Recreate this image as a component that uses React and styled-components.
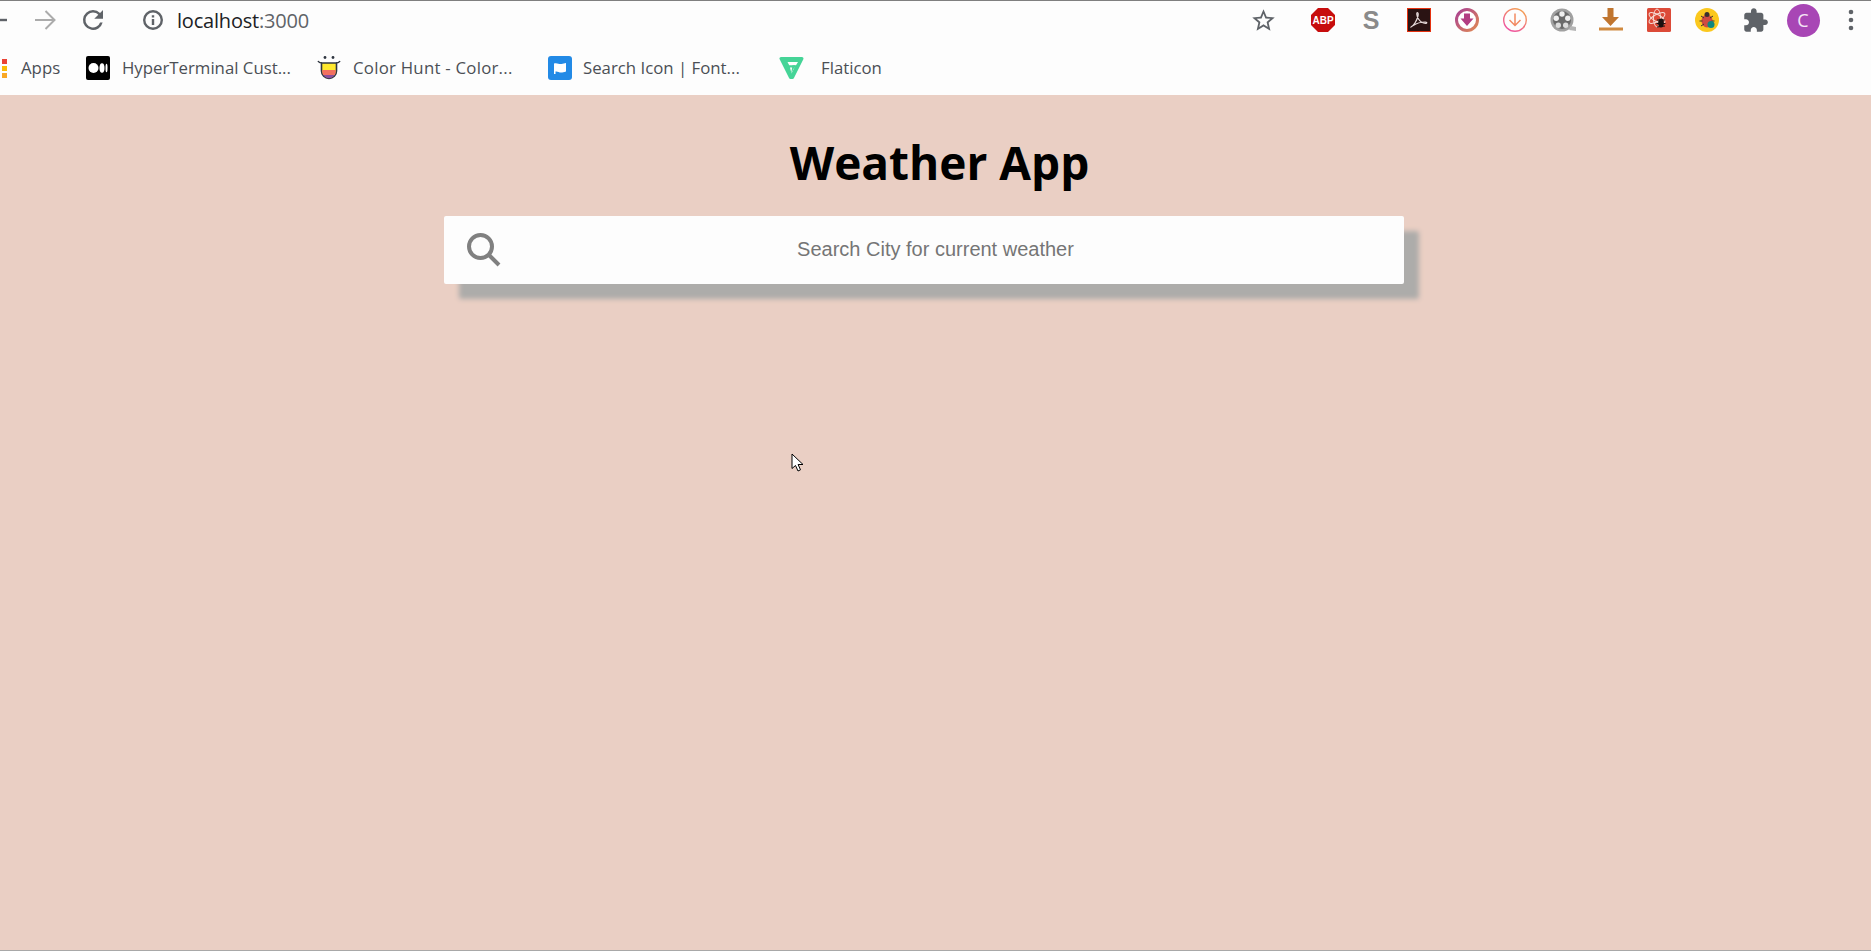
import React from "react";
import styled, { createGlobalStyle } from "styled-components";

const GlobalStyle = createGlobalStyle`
  html, body {
    margin: 0;
    padding: 0;
    height: 100%;
    overflow: hidden;
    background: #eacfc4;
  }
  #root {
    height: 100%;
  }
`;

const BackArrow = () => (
  <svg width="21" height="30" viewBox="0 0 21 30" fill="none" stroke="#5f6368" strokeWidth="2.4">
    <path d="M0 15h7" />
  </svg>
);

const ForwardArrow = () => (
  <svg width="24" height="24" viewBox="0 0 24 24" fill="none" stroke="#ababab" strokeWidth="2">
    <path d="M2 12h19M12.5 3l9 9-9 9" />
  </svg>
);

const ReloadIcon = () => (
  <svg width="30" height="30" viewBox="0 0 24 24" fill="#5f6368">
    <path d="M17.65 6.35A7.96 7.96 0 0 0 12 4a8 8 0 1 0 7.73 10h-2.08A6 6 0 1 1 12 6c1.66 0 3.14.69 4.22 1.78L13 11h7V4l-2.35 2.35z" />
  </svg>
);

const InfoIcon = () => (
  <svg width="24" height="24" viewBox="0 0 24 24" fill="#5f6368">
    <path d="M12 2a10 10 0 1 0 0 20 10 10 0 0 0 0-20zm0 17.6a7.6 7.6 0 1 1 0-15.2 7.6 7.6 0 0 1 0 15.2z" />
    <path d="M10.8 11h2.4v6h-2.4zM10.8 7.2h2.4v2.4h-2.4z" />
  </svg>
);

const StarIcon = () => (
  <svg width="27" height="27" viewBox="0 0 24 24" fill="#5f6368">
    <path d="M22 9.24l-7.19-.62L12 2 9.19 8.63 2 9.24l5.46 4.73L5.82 21 12 17.27 18.18 21l-1.63-7.03L22 9.24zM12 15.4l-3.76 2.27 1-4.28-3.32-2.88 4.38-.38L12 6.1l1.71 4.04 4.38.38-3.32 2.88 1 4.28L12 15.4z" />
  </svg>
);

const AbpIcon = () => (
  <svg width="26" height="26" viewBox="0 0 26 26">
    <path d="M8 1h10l7 7v10l-7 7H8l-7-7V8z" fill="#c70d0d" />
    <text x="13" y="17" textAnchor="middle" fontFamily="Liberation Sans" fontWeight="700" fontSize="10" fill="#fff">ABP</text>
  </svg>
);

const PdfIcon = () => (
  <svg width="24" height="24" viewBox="0 0 24 24">
    <rect x="0.5" y="0.5" width="23" height="23" fill="#2a1313" stroke="#e5310f" />
    <path d="M4 19c3-1.5 6-7 7-11 .4-2 .2-3.500-.6-3.500-1 0-.8 3.500 1.100 6.500 1.800 2.800 4.500 4.400 7.500 4.300 1.300-.1 1-1.300-.8-1.300-3.500 0-9 1.500-12 3.500-1.200.8-2.200 1.300-2.200 1.500z" fill="none" stroke="#e9dcdc" strokeWidth="1.200" />
  </svg>
);

const RingDownloadIcon = () => (
  <svg width="26" height="26" viewBox="0 0 26 26">
    <defs>
      <linearGradient id="ringA" x1="0" y1="0" x2="1" y2="1">
        <stop offset="0" stopColor="#a83f93" />
        <stop offset="1" stopColor="#e08a55" />
      </linearGradient>
    </defs>
    <circle cx="13" cy="13" r="10.500" fill="#fff" stroke="url(#ringA)" strokeWidth="3" />
    <path d="M10 6.500h6v5h3.500L13 19l-6.500-7.500H10z" fill="#b23d83" />
  </svg>
);

const OutlineDownloadIcon = () => (
  <svg width="26" height="26" viewBox="0 0 26 26" fill="none">
    <defs>
      <linearGradient id="ringB" x1="0.8" y1="0" x2="0.2" y2="1">
        <stop offset="0" stopColor="#f4a452" />
        <stop offset="1" stopColor="#ee4fa5" />
      </linearGradient>
    </defs>
    <circle cx="13" cy="13" r="11.300" stroke="url(#ringB)" strokeWidth="1.400" />
    <path d="M13 6.500v12M7.500 13l5.500 5.500 5.500-5.500" stroke="#f28a62" strokeWidth="1.500" />
  </svg>
);

const ReelIcon = () => (
  <svg width="26" height="26" viewBox="0 0 26 26">
    <circle cx="12" cy="13" r="11.500" fill="#a0a0a0" />
    <circle cx="12" cy="13" r="9" fill="#6a6a6a" />
    <circle cx="12" cy="7" r="2.700" fill="#f0f0f0" />
    <circle cx="6.200" cy="11.200" r="2.700" fill="#f0f0f0" />
    <circle cx="17.800" cy="11.200" r="2.700" fill="#f0f0f0" />
    <circle cx="8.300" cy="18.200" r="2.700" fill="#dcdcdc" />
    <circle cx="15.700" cy="18.200" r="2.700" fill="#dcdcdc" />
    <path d="M21 19l5 1v4l-7-1z" fill="#b5b5b5" />
  </svg>
);

const SaveIcon = () => (
  <svg width="26" height="26" viewBox="0 0 26 26" fill="#c0752f">
    <path d="M9.500 1h6v9h5.500L12.500 19 4 10h5.500z" />
    <rect x="1" y="20.500" width="24" height="3" fill="#d08a40" />
  </svg>
);

const AtomBugIcon = () => (
  <svg width="24" height="24" viewBox="0 0 24 24">
    <rect width="24" height="24" rx="1.500" fill="#dc4a38" />
    <g fill="none" stroke="#f6dcd6" strokeWidth="1">
      <ellipse cx="10" cy="10" rx="9" ry="3.500" transform="rotate(30 10 10)" />
      <ellipse cx="10" cy="10" rx="9" ry="3.500" transform="rotate(-30 10 10)" />
      <ellipse cx="10" cy="10" rx="3.500" ry="9" />
    </g>
    <ellipse cx="14" cy="15" rx="2.800" ry="4.500" fill="#1c1010" />
    <path d="M10 12l8 0M9.500 15.500h9M10 19l8-1" stroke="#1c1010" strokeWidth="1" />
  </svg>
);

const BugIcon = () => (
  <svg width="24" height="24" viewBox="0 0 24 24">
    <circle cx="12" cy="12" r="12" fill="#fbc81e" />
    <ellipse cx="12" cy="13" rx="5.500" ry="6.500" fill="#cf4a43" />
    <circle cx="12" cy="6.500" r="2.500" fill="#3a3030" />
    <path d="M6 8l3 2M18 8l-3 2M4.500 13h3M16.500 13h3M6 18l3-2" stroke="#3a3030" strokeWidth="1" />
    <circle cx="16" cy="16.500" r="3.500" fill="#10877e" />
  </svg>
);

const PuzzleIcon = () => (
  <svg width="27" height="27" viewBox="0 0 24 24" fill="#5f6368">
    <path d="M20.500 11H19V7c0-1.100-.9-2-2-2h-4V3.500C13 2.120 11.880 1 10.500 1S8 2.120 8 3.500V5H4c-1.100 0-1.990.9-1.990 2v3.800H3.500c1.490 0 2.700 1.210 2.700 2.700s-1.210 2.700-2.700 2.700H2V20c0 1.100.9 2 2 2h3.800v-1.500c0-1.490 1.210-2.700 2.700-2.700 1.490 0 2.700 1.210 2.700 2.700V22H17c1.100 0 2-.9 2-2v-4h1.500c1.380 0 2.500-1.120 2.500-2.500S21.880 11 20.500 11z" />
  </svg>
);

const MoreIcon = () => (
  <svg width="6" height="22" viewBox="0 0 6 22" fill="#5f6368">
    <circle cx="3" cy="3" r="2.300" />
    <circle cx="3" cy="11" r="2.300" />
    <circle cx="3" cy="19" r="2.300" />
  </svg>
);

const MediumIcon = () => (
  <svg width="24" height="24" viewBox="0 0 24 24">
    <rect width="24" height="24" rx="2" fill="#000" />
    <circle cx="7.500" cy="12" r="5" fill="#fff" />
    <ellipse cx="16" cy="12" rx="2.500" ry="4.700" fill="#fff" />
    <ellipse cx="20.500" cy="12" rx="1" ry="4.200" fill="#fff" />
  </svg>
);

const ColorHuntIcon = () => (
  <svg width="24" height="26" viewBox="0 0 24 26">
    <path d="M4.500 8h15v8a7.500 7.500 0 0 1-15 0z" fill="#ffe92e" stroke="#2f3640" strokeWidth="1.600" />
    <path d="M5.300 15h13.400v2a6.700 6.700 0 0 1-1 3H6.300a6.700 6.700 0 0 1-1-3z" fill="#f2705f" />
    <path d="M6.300 20h11.400a6.700 6.700 0 0 1-11.400 0z" fill="#8a4f9e" />
    <path d="M1 6c1 2 2.500 2 4 2M23 6c-1 2-2.500 2-4 2" stroke="#2f3640" strokeWidth="1.600" fill="none" />
    <circle cx="8" cy="2.500" r="1.400" fill="#2f3640" />
    <circle cx="16" cy="2.500" r="1.400" fill="#2f3640" />
  </svg>
);

const FontIcon = () => (
  <svg width="24" height="24" viewBox="0 0 24 24">
    <rect width="24" height="24" rx="3" fill="#228ae6" />
    <path d="M6 7.500c3-1.200 5 1 7.500.5 1.500-.2 3-.5 4.500-1v8.500c-2 .8-3.500 1-5 1-2 0-3.500-1.500-5.500-1v2.500H6z" fill="#fff" />
  </svg>
);

const FlaticonLogo = () => (
  <svg width="25" height="24" viewBox="0 0 25 24">
    <path d="M2 2.500h21L13.500 21.500h-2z" fill="#45d497" stroke="#45d497" strokeWidth="3" strokeLinejoin="round" />
    <path d="M8.500 6h10.500l-2 3.200H10.200zM11 11.500h4.500l-3 6z" fill="#fff" />
    <path d="M13.500 9.200h3L12 18z" fill="#45d497" />
  </svg>
);

const SearchGlass = () => (
  <svg width="35" height="35" viewBox="0 0 35 35" fill="none" stroke="#808080">
    <circle cx="14.500" cy="14.500" r="11.500" strokeWidth="4" />
    <path d="M22.500 22.500L33 33" strokeWidth="4" />
  </svg>
);

const CursorArrow = () => (
  <svg width="14" height="20" viewBox="0 0 14 20">
    <path d="M1 1v14.500l3.500-3 2.500 5.500 2.500-1.200-2.400-5.300H12z" fill="#fff" stroke="#000" strokeWidth="1" />
  </svg>
);

const bookmarks = [
  { icon: <MediumIcon />, label: "HyperTerminal Cust...", gap: 12, tracking: 0 },
  { icon: <ColorHuntIcon />, label: "Color Hunt - Color...", gap: 12, tracking: 0.25 },
  { icon: <FontIcon />, label: "Search Icon | Font...", gap: 11, tracking: 0 },
  { icon: <FlaticonLogo />, label: "Flaticon", gap: 17, tracking: 0 },
];

const App = () => {
  return (
    <Screen>
      <GlobalStyle />
      <Browser>
        <NavRow>
          <NavLeft>
            <BackSlot><BackArrow /></BackSlot>
            <NavButton><ForwardArrow /></NavButton>
            <NavButton><ReloadIcon /></NavButton>
            <Address>
              <InfoIcon />
              <Url>localhost<UrlPort>:3000</UrlPort></Url>
            </Address>
          </NavLeft>
          <NavRight>
            <StarSlot><StarIcon /></StarSlot>
            <Extension><AbpIcon /></Extension>
            <Extension><LetterS>S</LetterS></Extension>
            <Extension><PdfIcon /></Extension>
            <Extension><RingDownloadIcon /></Extension>
            <Extension><OutlineDownloadIcon /></Extension>
            <Extension><ReelIcon /></Extension>
            <Extension><SaveIcon /></Extension>
            <Extension><AtomBugIcon /></Extension>
            <Extension><BugIcon /></Extension>
            <Extension><PuzzleIcon /></Extension>
            <Extension><Avatar>C</Avatar></Extension>
            <MoreSlot><MoreIcon /></MoreSlot>
          </NavRight>
        </NavRow>
        <BookmarkRow>
          <AppsItem>
            <AppsDots>
              <AppsDot $color="#ea4335" />
              <AppsDot $color="#fbbc05" />
              <AppsDot $color="#f9a825" />
            </AppsDots>
            <BookmarkLabel>Apps</BookmarkLabel>
          </AppsItem>
          {bookmarks.map((b) => (
            <Bookmark key={b.label} $gap={b.gap}>
              <BookmarkIcon>{b.icon}</BookmarkIcon>
              <BookmarkLabel $tracking={b.tracking}>{b.label}</BookmarkLabel>
            </Bookmark>
          ))}
        </BookmarkRow>
      </Browser>
      <Page>
        <Title>Weather App</Title>
        <SearchWrap>
          <SearchIconBox><SearchGlass /></SearchIconBox>
          <SearchInput type="text" placeholder="Search City for current weather" />
        </SearchWrap>
        <Pointer><CursorArrow /></Pointer>
      </Page>
    </Screen>
  );
};

export default App;

const Screen = styled.div`
  height: 951px;
  width: 1871px;
  display: flex;
  flex-direction: column;
  overflow: hidden;
`;

const Browser = styled.header`
  height: 95px;
  flex: none;
  background: #fdfdfd;
  border-top: 1px solid #7f7f7f;
  box-sizing: border-box;
  font-family: "Open Sans", sans-serif;
`;

const NavRow = styled.div`
  height: 38px;
  margin-bottom: 2px;
  display: flex;
  align-items: center;
  justify-content: space-between;
`;

const NavLeft = styled.div`
  display: flex;
  align-items: center;
`;

const BackSlot = styled.div`
  width: 21px;
  height: 30px;
`;

const NavButton = styled.div`
  width: 48px;
  height: 38px;
  display: flex;
  align-items: center;
  justify-content: center;
`;

const Address = styled.div`
  display: flex;
  align-items: center;
  gap: 12px;
  margin-left: 24px;
`;

const Url = styled.span`
  font-size: 20px;
  color: #202124;
  letter-spacing: -0.2px;
`;

const UrlPort = styled.span`
  color: #5f6368;
`;

const NavRight = styled.div`
  display: flex;
  align-items: center;
`;

const Extension = styled.div`
  width: 48px;
  height: 38px;
  display: flex;
  align-items: center;
  justify-content: center;
`;

const StarSlot = styled(Extension)`
  margin-right: 12px;
`;

const MoreSlot = styled(Extension)`
  width: 44px;
  justify-content: flex-start;
  padding-left: 21px;
  box-sizing: border-box;
`;

const LetterS = styled.span`
  font-family: "Liberation Sans", sans-serif;
  font-weight: 700;
  font-size: 25px;
  color: #8a8a8a;
`;

const Avatar = styled.div`
  width: 33px;
  height: 33px;
  border-radius: 50%;
  background: #a846b5;
  color: #f4e6f6;
  font-size: 18px;
  display: flex;
  align-items: center;
  justify-content: center;
`;

const BookmarkRow = styled.nav`
  height: 54px;
  display: flex;
  align-items: center;
`;

const AppsItem = styled.div`
  width: 86px;
  flex: none;
  display: flex;
  align-items: center;
  gap: 14px;
  padding-left: 2px;
  box-sizing: border-box;
`;

const AppsDots = styled.div`
  display: flex;
  flex-direction: column;
  gap: 2px;
`;

const AppsDot = styled.span`
  width: 5px;
  height: 5px;
  background: ${(props) => props.$color};
`;

const Bookmark = styled.div`
  width: 231px;
  flex: none;
  display: flex;
  align-items: center;
  gap: ${(props) => props.$gap}px;
`;

const BookmarkIcon = styled.span`
  display: flex;
`;

const BookmarkLabel = styled.span`
  font-size: 16.8px;
  color: #4b4f55;
  white-space: nowrap;
  padding-bottom: 2px;
  letter-spacing: ${(props) => props.$tracking || 0}px;
`;

const Page = styled.main`
  flex: 1;
  position: relative;
  background: #eacfc4;
  border-bottom: 1px solid #a8a8a8;
  display: flex;
  flex-direction: column;
  align-items: center;
`;

const Title = styled.h1`
  margin: 37px 0 24px;
  padding-left: 8px;
  font-family: "Open Sans", sans-serif;
  font-size: 46px;
  line-height: 60px;
  font-weight: 700;
  color: #000;
`;

const SearchWrap = styled.div`
  position: relative;
  width: 983px;
`;

const SearchIconBox = styled.div`
  position: absolute;
  left: 22px;
  top: 16px;
  display: flex;
`;

const SearchInput = styled.input`
  display: block;
  width: 960px;
  height: 68px;
  box-sizing: border-box;
  border: none;
  outline: none;
  padding: 0 0 2px 23px;
  border-radius: 2px;
  background: #fdfdfd;
  box-shadow: 15px 15px 5px #adacaa;
  font-family: "Liberation Sans", sans-serif;
  font-size: 20px;
  text-align: center;
  color: #6f6f6f;

  &::placeholder {
    color: #757575;
    opacity: 1;
  }
`;

const Pointer = styled.div`
  position: absolute;
  left: 791px;
  top: 358px;
  display: flex;
`;
